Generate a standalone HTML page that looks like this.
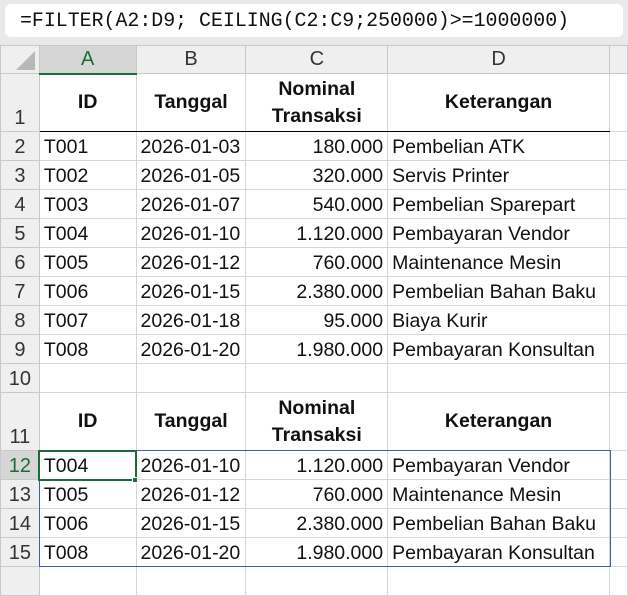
<!DOCTYPE html><html><head><meta charset="utf-8"><style>
*{margin:0;padding:0;box-sizing:border-box}
body{width:628px;height:576px;overflow:hidden;background:#e9e9e9;font-family:"Liberation Sans",Arial,sans-serif;position:relative}
.fb{position:absolute;left:5px;top:4px;width:618px;height:33px;background:#fff;border-radius:6px;font-family:"Liberation Mono",monospace;font-size:19.9px;line-height:33px;padding-left:15px;color:#111}
table{position:absolute;left:0;top:45px;border-collapse:collapse;table-layout:fixed;background:#fff}
td{border:1px solid #d6d6d6;font-size:19.5px;color:#111;white-space:nowrap;overflow:hidden;padding:0 4px;height:29px;vertical-align:bottom;padding-bottom:1px}
td.h{background:#efefef;color:#333;text-align:center;border-color:#c8c8c8;font-size:20px;padding:0 0 1px 0}
tr.ch td{height:28px;background:#efefef;color:#333;text-align:center;vertical-align:middle;padding:0;font-size:20px;border-color:#c8c8c8}
td.r{text-align:right}
td.b{font-weight:bold;text-align:center;vertical-align:middle;line-height:27px;padding:0;font-size:19.5px}
tr.t td{height:58px}
tr.hb td.x{border-bottom:1.5px solid #000}
.sel{background:#d6d6d6!important;color:#1e6b3a!important}
.selc{background:#d6d6d6!important;color:#1e6b3a!important;border-bottom:2px solid #1e6b3a!important}
</style></head><body>
<div class="fb">=FILTER(A2:D9; CEILING(C2:C9;250000)&gt;=1000000)</div>
<table>
<colgroup><col style="width:39px"><col style="width:97px"><col style="width:110px"><col style="width:142px"><col style="width:222px"><col style="width:18px"></colgroup>
<tr class="ch"><td style="position:relative"><svg width="39" height="28" style="position:absolute;left:0;top:0"><polygon points="34,5 34,24 15,24" fill="#b8b8b8"/></svg></td><td class="selc">A</td><td>B</td><td>C</td><td>D</td><td></td></tr>
<tr class="t hb"><td class="h">1</td><td class="b x">ID</td><td class="b x">Tanggal</td><td class="b x">Nominal<br>Transaksi</td><td class="b x">Keterangan</td><td></td></tr>
<tr><td class="h">2</td><td>T001</td><td>2026-01-03</td><td class="r">180.000</td><td>Pembelian ATK</td><td></td></tr>
<tr><td class="h">3</td><td>T002</td><td>2026-01-05</td><td class="r">320.000</td><td>Servis Printer</td><td></td></tr>
<tr><td class="h">4</td><td>T003</td><td>2026-01-07</td><td class="r">540.000</td><td>Pembelian Sparepart</td><td></td></tr>
<tr><td class="h">5</td><td>T004</td><td>2026-01-10</td><td class="r">1.120.000</td><td>Pembayaran Vendor</td><td></td></tr>
<tr><td class="h">6</td><td>T005</td><td>2026-01-12</td><td class="r">760.000</td><td>Maintenance Mesin</td><td></td></tr>
<tr><td class="h">7</td><td>T006</td><td>2026-01-15</td><td class="r">2.380.000</td><td>Pembelian Bahan Baku</td><td></td></tr>
<tr><td class="h">8</td><td>T007</td><td>2026-01-18</td><td class="r">95.000</td><td>Biaya Kurir</td><td></td></tr>
<tr><td class="h">9</td><td>T008</td><td>2026-01-20</td><td class="r">1.980.000</td><td>Pembayaran Konsultan</td><td></td></tr>
<tr><td class="h">10</td><td></td><td></td><td></td><td></td><td></td></tr>
<tr class="t"><td class="h">11</td><td class="b">ID</td><td class="b">Tanggal</td><td class="b">Nominal<br>Transaksi</td><td class="b">Keterangan</td><td></td></tr>
<tr><td class="h sel">12</td><td>T004</td><td>2026-01-10</td><td class="r">1.120.000</td><td>Pembayaran Vendor</td><td></td></tr>
<tr><td class="h">13</td><td>T005</td><td>2026-01-12</td><td class="r">760.000</td><td>Maintenance Mesin</td><td></td></tr>
<tr><td class="h">14</td><td>T006</td><td>2026-01-15</td><td class="r">2.380.000</td><td>Pembelian Bahan Baku</td><td></td></tr>
<tr><td class="h">15</td><td>T008</td><td>2026-01-20</td><td class="r">1.980.000</td><td>Pembayaran Konsultan</td><td></td></tr>
<tr><td class="h" style="height:12px"></td><td style="height:12px"></td><td></td><td></td><td></td><td></td></tr>
</table>
<div style="position:absolute;left:39px;top:450px;width:572px;height:117px;border:1px solid #3b5fa8"></div>
<div style="position:absolute;left:38px;top:450px;width:99px;height:31px;border:2px solid #1e6b3a"></div>
<div style="position:absolute;left:132px;top:477px;width:6px;height:6px;background:#1e6b3a;border:1px solid #fff"></div>
</body></html>
